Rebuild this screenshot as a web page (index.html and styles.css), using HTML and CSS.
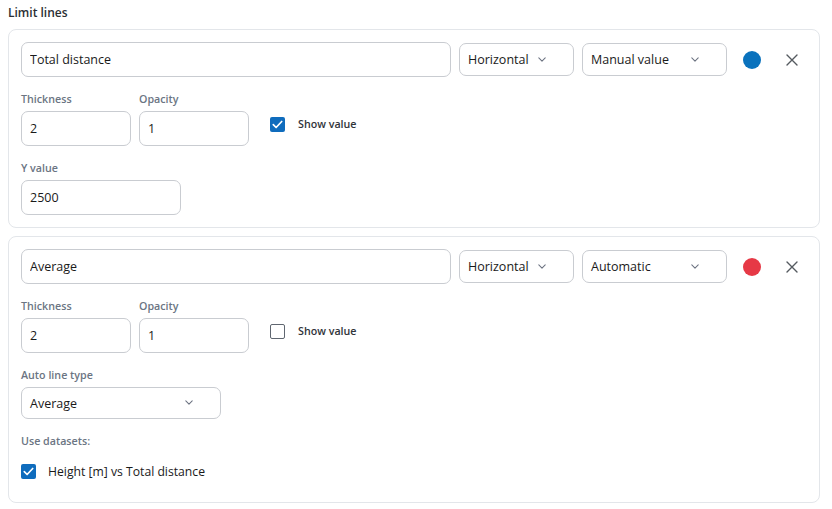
FILE: index.html
```html
<!DOCTYPE html>
<html lang="en">
<head>
<meta charset="utf-8">
<title>Limit lines</title>
<link rel="stylesheet" href="styles.css">
</head>
<body>
<section class="panel">
  <h3 class="panel-title">Limit lines</h3>

  <div class="limit-card">
    <div class="line-head">
      <input class="text-field name-field" type="text" value="Total distance">
      <div class="select-box select-orient"><span class="select-text">Horizontal</span><svg class="chev" viewBox="0 0 10 6" width="10" height="6"><path d="M1 1l4 4 4-4" fill="none" stroke="currentColor" stroke-width="1.3" stroke-linecap="round" stroke-linejoin="round"/></svg></div>
      <div class="select-box select-mode"><span class="select-text">Manual value</span><svg class="chev" viewBox="0 0 10 6" width="10" height="6"><path d="M1 1l4 4 4-4" fill="none" stroke="currentColor" stroke-width="1.3" stroke-linecap="round" stroke-linejoin="round"/></svg></div>
      <span class="color-dot dot-blue"></span>
      <button class="remove-btn" type="button" aria-label="Remove"><svg viewBox="0 0 12 12" width="12" height="12"><path d="M1 1l10 10M11 1L1 11" fill="none" stroke="currentColor" stroke-width="1.4" stroke-linecap="round"/></svg></button>
    </div>

    <div class="field-row">
      <div class="field">
        <span class="field-label">Thickness</span>
        <input class="text-field num-field" type="text" value="2">
      </div>
      <div class="field">
        <span class="field-label">Opacity</span>
        <input class="text-field num-field" type="text" value="1">
      </div>
      <div class="check-inline">
        <span class="check is-on"><svg viewBox="0 0 16 16" width="15" height="15"><path d="M3.5 8.2l3 3 6-6.4" fill="none" stroke="#fff" stroke-width="1.8" stroke-linecap="round" stroke-linejoin="round"/></svg></span>
        <span class="check-text">Show value</span>
      </div>
    </div>

    <div class="field">
      <span class="field-label">Y value</span>
      <input class="text-field y-field" type="text" value="2500">
    </div>
  </div>

  <div class="limit-card">
    <div class="line-head">
      <input class="text-field name-field" type="text" value="Average">
      <div class="select-box select-orient"><span class="select-text">Horizontal</span><svg class="chev" viewBox="0 0 10 6" width="10" height="6"><path d="M1 1l4 4 4-4" fill="none" stroke="currentColor" stroke-width="1.3" stroke-linecap="round" stroke-linejoin="round"/></svg></div>
      <div class="select-box select-mode"><span class="select-text">Automatic</span><svg class="chev" viewBox="0 0 10 6" width="10" height="6"><path d="M1 1l4 4 4-4" fill="none" stroke="currentColor" stroke-width="1.3" stroke-linecap="round" stroke-linejoin="round"/></svg></div>
      <span class="color-dot dot-red"></span>
      <button class="remove-btn" type="button" aria-label="Remove"><svg viewBox="0 0 12 12" width="12" height="12"><path d="M1 1l10 10M11 1L1 11" fill="none" stroke="currentColor" stroke-width="1.4" stroke-linecap="round"/></svg></button>
    </div>

    <div class="field-row">
      <div class="field">
        <span class="field-label">Thickness</span>
        <input class="text-field num-field" type="text" value="2">
      </div>
      <div class="field">
        <span class="field-label">Opacity</span>
        <input class="text-field num-field" type="text" value="1">
      </div>
      <div class="check-inline">
        <span class="check"></span>
        <span class="check-text">Show value</span>
      </div>
    </div>

    <div class="field">
      <span class="field-label">Auto line type</span>
      <div class="select-box select-auto"><span class="select-text">Average</span><svg class="chev" viewBox="0 0 10 6" width="10" height="6"><path d="M1 1l4 4 4-4" fill="none" stroke="currentColor" stroke-width="1.3" stroke-linecap="round" stroke-linejoin="round"/></svg></div>
    </div>

    <div class="datasets">
      <span class="field-label">Use datasets:</span>
      <div class="dataset-item">
        <span class="check is-on"><svg viewBox="0 0 16 16" width="15" height="15"><path d="M3.5 8.2l3 3 6-6.4" fill="none" stroke="#fff" stroke-width="1.8" stroke-linecap="round" stroke-linejoin="round"/></svg></span>
        <span class="dataset-name">Height [m] vs Total distance</span>
      </div>
    </div>
  </div>
</section>
</body>
</html>
```

FILE: styles.css
```css
* { box-sizing: border-box; }

html, body {
  background: #ffffff;
}

body {
  margin: 0;
  padding: 5px 12px 0 8px;
  font-family: "Open Sans", "Noto Sans", "Liberation Sans", sans-serif;
  color: #1f2328;
}

.panel {
  display: flex;
  flex-direction: column;
  gap: 8px;
}

.panel-title {
  margin: 0 0 0;
  font-size: 12px;
  line-height: 16px;
  font-weight: 600;
  color: #2b2f33;
}

.limit-card {
  border: 1px solid #e3e6ea;
  border-radius: 8px;
  padding: 12px;
  display: flex;
  flex-direction: column;
  gap: 15px;
  background: #fff;
}

.line-head {
  display: flex;
  align-items: center;
  gap: 8px;
}

.text-field {
  height: 35px;
  border: 1px solid #c9ccd1;
  border-radius: 7px;
  padding: 0 8px;
  font-family: inherit;
  font-size: 12.5px;
  color: #1a1a1a;
  background: #fff;
  outline: none;
}

.name-field { flex: 1; min-width: 0; }
.num-field { width: 110px; }
.y-field { width: 160px; }

.select-box {
  height: 33px;
  border: 1px solid #c9ccd1;
  border-radius: 7px;
  padding: 0 8px;
  display: flex;
  align-items: center;
  font-size: 12.5px;
  color: #1a1a1a;
  background: #fff;
  position: relative;
}

.select-text { white-space: nowrap; }

.chev {
  position: absolute;
  right: 27px;
  top: 50%;
  margin-top: -3px;
  width: 8px;
  height: 5px;
  color: #6b7280;
}

.select-orient { width: 115px; }
.select-mode { width: 145px; }
.select-auto { width: 200px; height: 32px; }

.color-dot {
  width: 18px;
  height: 18px;
  border-radius: 50%;
  margin-left: 8px;
  flex: none;
}
.dot-blue { background: #0a72bd; }
.dot-red { background: #e63946; }

.remove-btn {
  width: 30px;
  height: 30px;
  margin-left: 8px;
  border: 0;
  padding: 0;
  background: transparent;
  color: #555a60;
  display: flex;
  align-items: center;
  justify-content: center;
  flex: none;
}

.field-row {
  display: flex;
  gap: 8px;
  align-items: flex-start;
}

.field {
  display: flex;
  flex-direction: column;
  gap: 4px;
  align-items: flex-start;
}

.field-label {
  font-size: 10.7px;
  line-height: 15px;
  font-weight: 600;
  color: #6b7583;
}

.check-inline {
  display: flex;
  align-items: center;
  gap: 13px;
  margin-left: 13px;
  padding-top: 25px;
}

.check {
  width: 15px;
  height: 15px;
  border: 1.5px solid #5f6670;
  border-radius: 2px;
  background: #fff;
  display: flex;
  align-items: center;
  justify-content: center;
  flex: none;
}
.check.is-on {
  border: 0;
  background: #0f6cbd;
}

.check-text {
  font-size: 10.7px;
  line-height: 15px;
  font-weight: 600;
  color: #30343a;
}

.datasets {
  display: flex;
  flex-direction: column;
  gap: 15px;
  padding-bottom: 11px;
}

.dataset-item {
  display: flex;
  align-items: center;
  gap: 12px;
}

.dataset-name {
  font-size: 12.2px;
  line-height: 15px;
  color: #1a1a1a;
}
```
